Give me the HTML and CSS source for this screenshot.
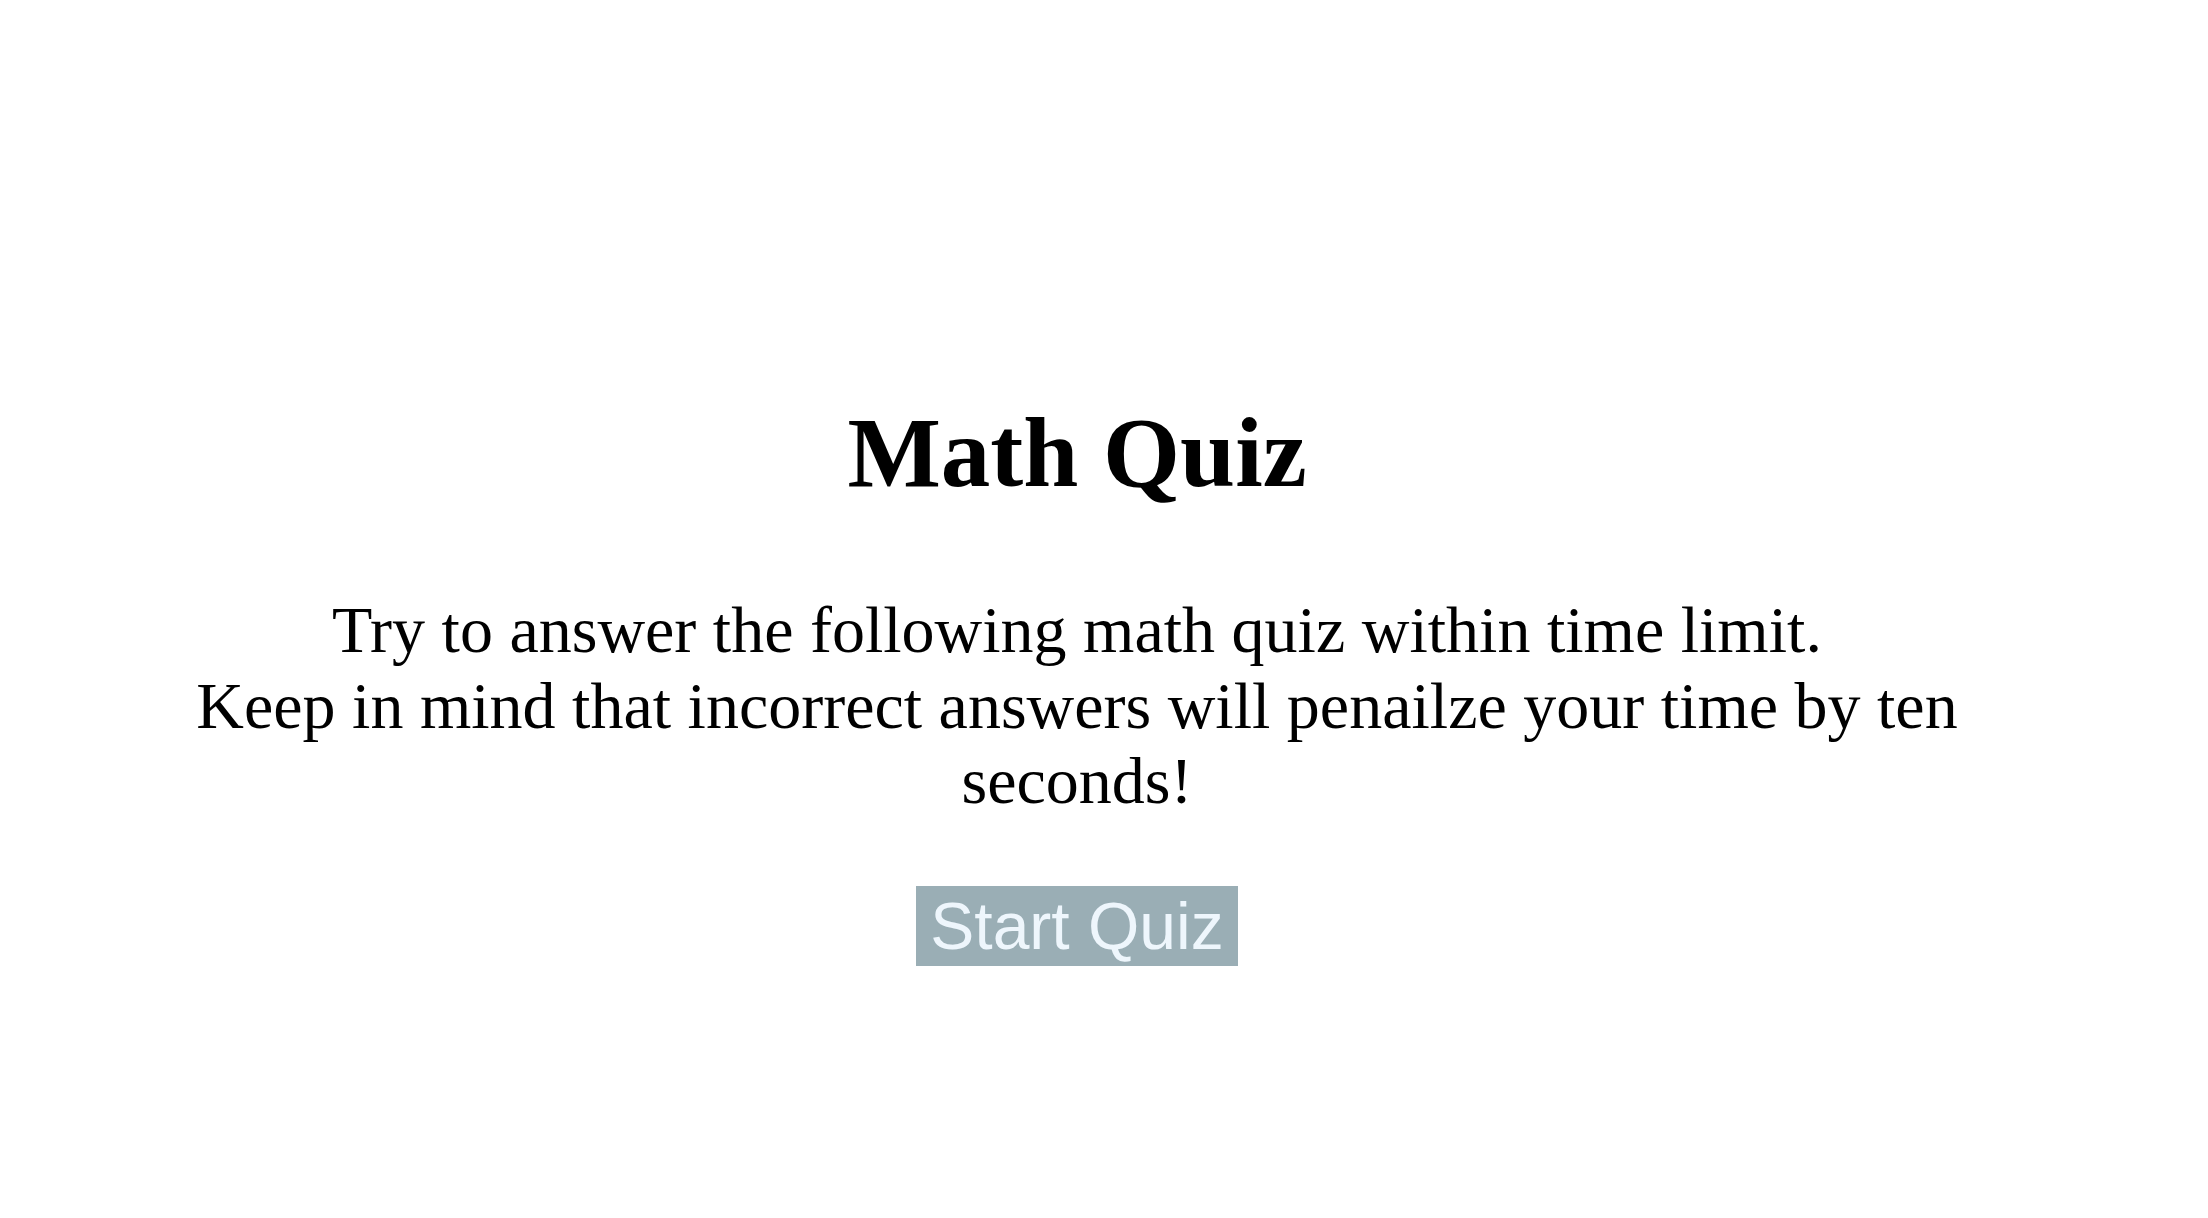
FILE: index.html
```html
<!DOCTYPE html>
<html lang="en">
<head>
<meta charset="utf-8">
<title>Math Quiz</title>
<link rel="stylesheet" href="styles.css">
</head>
<body>
<main class="page">
  <section class="start">
    <h1 class="title">Math Quiz</h1>
    <p class="intro">Try to answer the following math quiz within time limit.<br>Keep in mind that incorrect answers will penailze your time by ten seconds!</p>
    <button class="start-btn" type="button">Start Quiz</button>
  </section>
</main>
</body>
</html>
```

FILE: styles.css
```css
html, body {
  margin: 0;
  padding: 0;
  background: #ffffff;
}

body {
  font-family: "Liberation Serif", "Times New Roman", serif;
  color: #000000;
}

.page {
  width: 2154px;
  padding-top: 395px;
}

.start {
  display: flex;
  flex-direction: column;
  align-items: center;
  text-align: center;
}

.title {
  margin: 0;
  font-size: 99px;
  line-height: 115px;
  font-weight: bold;
}

.intro {
  margin: 82px 0 0;
  max-width: 1840px;
  font-size: 66px;
  line-height: 75.5px;
}

.start-btn {
  margin-top: 67px;
  padding: 5px 14px;
  border: none;
  border-radius: 0;
  background: #9aaeb5;
  color: #eef6fc;
  font-family: "Liberation Sans", Arial, sans-serif;
  font-size: 66px;
  line-height: 70px;
  cursor: pointer;
}
```
